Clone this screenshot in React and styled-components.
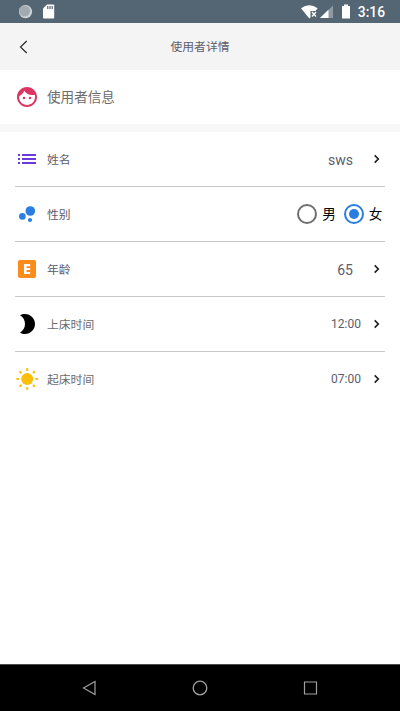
import React, { useState } from 'react';
import styled, { createGlobalStyle } from 'styled-components';
import { MdFace, MdList, MdBrightness2 } from 'react-icons/md';

const Colors = {
  status: '#546674',
  header: '#f4f4f4',
  band: '#f7f7f7',
  line: '#c8c8c8',
  label: '#5c5d6c',
  gray: '#6c6c6c',
  blue: '#2a7de1',
};

const GlobalStyle = createGlobalStyle`
  * {
    box-sizing: border-box;
  }

  body {
    margin: 0;
    background: #fff;
    font-family: Roboto, 'Noto Sans CJK SC', sans-serif;
  }
`;

const Screen = styled.div`
  display: flex;
  flex-direction: column;
  width: 400px;
  height: 711px;
  overflow: hidden;
`;

const StatusBar = styled.div`
  display: flex;
  flex: none;
  justify-content: space-between;
  height: 23px;
  padding: 0 15px 0 18px;
  background: ${Colors.status};

  svg {
    display: block;
  }
`;

const Clock = styled.span`
  color: #fff;
  font-size: 13.8px;
  font-weight: 500;
  line-height: 25px;
`;

const StatusGroup = styled.div`
  display: flex;
  gap: 6px;
`;

const Header = styled.header`
  display: grid;
  grid-template-columns: 40px 1fr 40px;
  flex: none;
  align-items: center;
  height: 47px;
  background: ${Colors.header};
`;

const BackButton = styled.button`
  height: 40px;
  padding: 0 0 0 19px;
  border: 0;
  background: none;

  svg {
    display: block;
  }
`;

const Title = styled.h1`
  margin: 0;
  color: ${Colors.label};
  font-size: 11.8px;
  font-weight: 400;
  line-height: 20px;
  text-align: center;
`;

const Section = styled.div`
  display: flex;
  flex: none;
  align-items: center;
  height: 62px;
  padding: 0 15px;
  border-bottom: 8px solid ${Colors.band};
`;

const IconBox = styled.span`
  display: flex;
  width: 24px;
  height: 24px;
  margin-right: 8px;
  color: ${(props) => props.$color};
`;

const SectionTitle = styled.h2`
  margin: 0;
  color: ${Colors.gray};
  font-size: 13.6px;
  font-weight: 400;
  line-height: 20px;
`;

const List = styled.div`
  flex: 1;
  padding: 0 15px;
`;

const Row = styled.div`
  display: flex;
  align-items: center;
  height: ${(props) => (props.$last ? '54px' : '55px')};
  border-bottom: ${(props) => (props.$last ? '0' : `1px solid ${Colors.line}`)};
`;

const Label = styled.span`
  flex: 1;
  padding-top: 2px;
  color: ${(props) => (props.$muted ? Colors.gray : Colors.label)};
  font-size: 11.8px;
  line-height: 20px;
`;

const Value = styled.span`
  margin-right: ${(props) => (props.$small ? '12px' : '20px')};
  padding-top: ${(props) => (props.$small ? '0' : '2px')};
  color: ${Colors.label};
  font-size: ${(props) => (props.$small ? '12px' : '14px')};
  line-height: 20px;
`;

const Arrow = styled.svg`
  display: block;
  margin-right: 4px;
`;

const Radio = styled.label`
  display: flex;
  align-items: center;
  color: #000;
  font-size: 13.6px;
  line-height: 20px;

  input {
    display: grid;
    place-content: center;
    width: 20px;
    height: 20px;
    margin: 0 5px 0 0;
    border: 2px solid #6f6f6f;
    border-radius: 50%;
    appearance: none;
  }

  input:checked {
    border-color: ${Colors.blue};
  }

  input:checked::before {
    width: 10px;
    height: 10px;
    border-radius: 50%;
    background: ${Colors.blue};
    content: '';
  }
`;

const RadioGroup = styled.div`
  display: flex;
  gap: 8px;
  margin-right: 2.6px;
`;

const NavBar = styled.nav`
  display: flex;
  flex: none;
  justify-content: space-between;
  align-items: center;
  height: 47px;
  padding: 0 81px;
  border-top: 1px solid #4a4a4a;
  background: #000;
`;

const rays = [0, 45, 90, 135, 180, 225, 270, 315];

const Sun = () => (
  <svg width="24" height="24" viewBox="0 0 24 24" fill="currentColor">
    <circle cx="12.2" cy="12" r="6" />
    {rays.map((angle) => (
      <rect
        key={angle}
        x="11.2"
        y="1.1"
        width="2"
        height="2.8"
        rx="0.4"
        transform={`rotate(${angle} 12.2 12)`}
      />
    ))}
  </svg>
);

const Bubbles = () => (
  <svg width="24" height="24" viewBox="0 0 24 24" fill="currentColor">
    <circle cx="7.4" cy="14.4" r="3.3" />
    <circle cx="15.3" cy="9" r="4.8" />
    <circle cx="15" cy="18" r="2.1" />
  </svg>
);

const Explicit = () => (
  <svg width="24" height="24" viewBox="0 0 24 24">
    <rect x="3" y="3" width="18" height="18" rx="2" fill="currentColor" />
    <path d="M9 7h6.200v2.200h-3.700v1.800h3.700v2.100h-3.700v1.800h3.700v2.200H9Z" fill="#fff" />
  </svg>
);

const Chevron = () => (
  <Arrow width="8" height="10" viewBox="0 0 8 10" fill="none">
    <path d="M1.700 1.400 5.300 5 1.700 8.600" stroke="#1c1c1c" strokeWidth="1.600" />
  </Arrow>
);

const StatusIcons = () => (
  <svg width="52" height="23" viewBox="300 0 52 23">
    <path d="M301 8.200Q309.300 2.300 317.600 8.200L315.500 11H310.500V17.300L309.300 18.500Z" fill="#fff" />
    <path d="m312 12 4 4.500m0-4.500-4 4.500" stroke="#fff" strokeWidth="1.300" />
    <path d="M333 5.500V18H320Z" fill="#fff" fillOpacity="0.350" />
    <path d="M328.500 9.800V18H320Z" fill="#fff" />
    <path d="M342 6H344V4.500H348V6H350V18.500H342Z" fill="#fff" />
  </svg>
);

const MainStatusBar = () => (
  <StatusBar>
    <svg width="40" height="23" viewBox="18 0 40 23">
      <circle cx="25.500" cy="11.600" r="6.600" fill="#d5dadd" />
      <circle cx="24.600" cy="11" r="5.600" fill="#a2abb2" />
      <circle cx="25" cy="11.300" r="5.500" fill="none" stroke="#bac1c6" strokeDasharray="1 1.500" />
      <path d="M47 4.500h6.200a1 1 0 0 1 1 1v12a1 1 0 0 1-1 1h-9.200a1 1 0 0 1-1-1V8.500Z" fill="#fff" />
      <path d="M47.800 6v3M50 6v3M52.200 6v3" stroke={Colors.status} strokeWidth="1.200" />
    </svg>
    <StatusGroup>
      <StatusIcons />
      <Clock>3:16</Clock>
    </StatusGroup>
  </StatusBar>
);

const App = () => {
  const [gender, setGender] = useState('女');

  return (
    <>
      <GlobalStyle />
      <Screen>
        <MainStatusBar />
        <Header>
          <BackButton aria-label="返回">
            <svg width="9" height="14" viewBox="0 0 9 14" fill="none">
              <path d="M7.700 1 1.500 7l6.200 6" stroke="#222" strokeWidth="1.100" />
            </svg>
          </BackButton>
          <Title>使用者详情</Title>
        </Header>
        <Section>
          <IconBox $color="#db3560">
            <MdFace size={24} />
          </IconBox>
          <SectionTitle>使用者信息</SectionTitle>
        </Section>
        <List>
          <Row>
            <IconBox $color="#6a3bd8">
              <MdList size={24} />
            </IconBox>
            <Label>姓名</Label>
            <Value>sws</Value>
            <Chevron />
          </Row>
          <Row>
            <IconBox $color={Colors.blue}>
              <Bubbles />
            </IconBox>
            <Label>性别</Label>
            <RadioGroup>
              {['男', '女'].map((item) => (
                <Radio key={item}>
                  <input
                    type="radio"
                    name="gender"
                    checked={gender === item}
                    onChange={() => setGender(item)}
                  />
                  {item}
                </Radio>
              ))}
            </RadioGroup>
          </Row>
          <Row>
            <IconBox $color="#fa8c1c">
              <Explicit />
            </IconBox>
            <Label>年龄</Label>
            <Value>65</Value>
            <Chevron />
          </Row>
          <Row>
            <IconBox $color="#000">
              <MdBrightness2 size={24} />
            </IconBox>
            <Label $muted>上床时间</Label>
            <Value $small>12:00</Value>
            <Chevron />
          </Row>
          <Row $last>
            <IconBox $color="#fcbf09">
              <Sun />
            </IconBox>
            <Label $muted>起床时间</Label>
            <Value $small>07:00</Value>
            <Chevron />
          </Row>
        </List>
        <NavBar>
          <svg width="16" height="16" viewBox="0 0 16 16" fill="none" stroke="#a0a0a0" strokeWidth="1.200">
            <path d="M14 1.500v13L2.500 8Z" />
          </svg>
          <svg width="16" height="16" viewBox="0 0 16 16" fill="none" stroke="#a0a0a0" strokeWidth="1.300">
            <circle cx="8" cy="8" r="6.800" />
          </svg>
          <svg width="16" height="16" viewBox="0 0 16 16" fill="none" stroke="#a0a0a0" strokeWidth="1.200">
            <path d="M1.500 2h12v12h-12Z" />
          </svg>
        </NavBar>
      </Screen>
    </>
  );
};

export default App;
